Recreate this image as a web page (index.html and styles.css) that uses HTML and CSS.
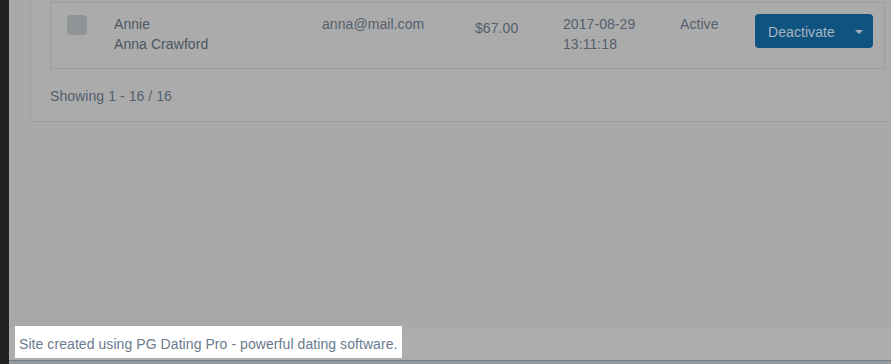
FILE: index.html
```html
<!DOCTYPE html>
<html>
<head>
<meta charset="utf-8">
<link rel="stylesheet" href="styles.css">
</head>
<body>
<div class="sidebar"></div>
<div class="main">
  <div class="content">
    <div class="panel">
      <div class="table">
        <div class="row">
          <div class="cell cell-check"><span class="checkbox"></span></div>
          <div class="cell cell-name">Annie<br>Anna Crawford</div>
          <div class="cell cell-email">anna@mail.com</div>
          <div class="cell cell-amount">$67.00</div>
          <div class="cell cell-date">2017-08-29<br>13:11:18</div>
          <div class="cell cell-status">Active</div>
          <div class="cell cell-action">
            <div class="btn-group">
              <span class="btn-label">Deactivate</span>
              <span class="caret"></span>
            </div>
          </div>
        </div>
      </div>
      <div class="showing">Showing 1 - 16 / 16</div>
    </div>
  </div>
  <div class="footer">
    <div class="footer-highlight">Site created using PG Dating Pro - powerful dating software.</div>
  </div>
  <div class="bottom-strip"></div>
</div>
</body>
</html>
```

FILE: styles.css
```css
html, body {
  margin: 0;
  padding: 0;
}
body {
  display: flex;
  height: 364px;
  overflow: hidden;
  font-family: "Liberation Sans", Arial, sans-serif;
  font-size: 14px;
  line-height: 20px;
  letter-spacing: 0.07px;
  color: #4b5663;
  background: #a9a9a9;
}
.sidebar {
  width: 9px;
  flex: none;
  background: #222222;
}
.main {
  flex: 1;
  display: flex;
  flex-direction: column;
  min-width: 0;
  overflow: hidden;
}
.content {
  padding-left: 21px;
  margin-right: -30px;
}
.panel {
  background: #ababab;
  border: 1px solid #9d9d9d;
  border-top: none;
  padding: 0 19px 15px 19px;
}
.table {
  margin-top: 2px;
  border: 1px solid #9d9d9d;
  width: 833px;
}
.row {
  display: grid;
  grid-template-columns: 63px 208px 153px 88px 117px 75px 118px;
  padding: 11px 0 14px 0;
}
.cell-check {
  padding-left: 16px;
  padding-top: 1px;
}
.checkbox {
  display: block;
  width: 20px;
  height: 20px;
  border-radius: 4px;
  background: #8f9496;
}
.cell-email, .cell-amount, .cell-date, .cell-status {
  color: #54606c;
}
.cell-amount {
  padding-top: 4px;
}
.btn-group {
  display: flex;
  align-items: center;
  justify-content: space-between;
  height: 34px;
  box-sizing: border-box;
  padding: 0 10px 0 13px;
  background: #0f5481;
  border-radius: 4px;
  color: #a9b4bf;
}
.btn-label {
  padding-top: 1px;
}
.caret {
  width: 0;
  height: 0;
  border-left: 4px solid transparent;
  border-right: 4px solid transparent;
  border-top: 4px solid #a9b4bf;
  margin-top: 1px;
}
.showing {
  margin-top: 17px;
  color: #54606c;
}
.footer {
  margin-top: auto;
  height: 31px;
  background: #adadad;
  padding-left: 6px;
}
.footer-highlight {
  display: inline-block;
  vertical-align: top;
  margin-top: -3px;
  width: 387px;
  box-sizing: border-box;
  padding: 8px 4px 4px 4px;
  background: #ffffff;
  color: #6a7a8d;
  white-space: nowrap;
}
.bottom-strip {
  height: 3px;
  border-top: 1px solid #6b7f8e;
  background: #9a9a9a;
}
```
